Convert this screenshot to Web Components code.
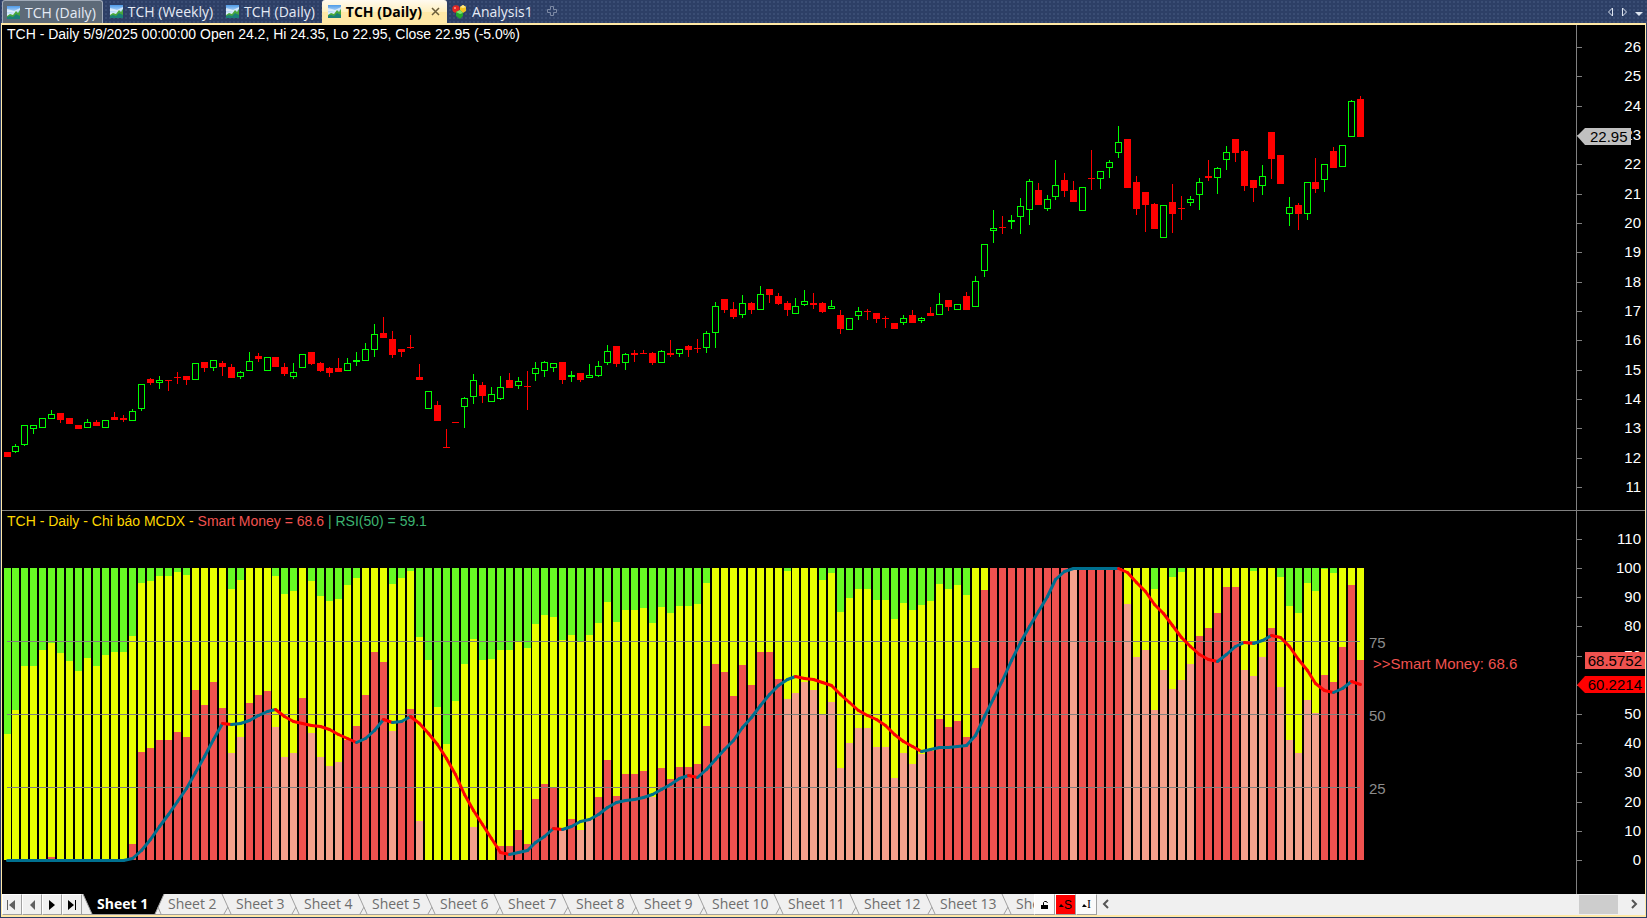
<!DOCTYPE html>
<html lang="en">
<head>
<meta charset="utf-8">
<title>TCH (Daily)</title>
<style>
  html, body { margin: 0; height: 100%; background: #2d3f66; overflow: hidden; }
  body { font-family: "Open Sans", "Noto Sans", sans-serif; font-size: 14px; }
</style>
</head>
<body>
<chart-window>
  <doc-tab slot="tab" icon="chart" class="shaded">TCH (Daily)</doc-tab>
  <doc-tab slot="tab" icon="chart">TCH (Weekly)</doc-tab>
  <doc-tab slot="tab" icon="chart">TCH (Daily)</doc-tab>
  <doc-tab slot="tab" icon="chart" active>TCH (Daily)</doc-tab>
  <doc-tab slot="tab" icon="analysis">Analysis1</doc-tab>
  <price-pane></price-pane>
  <mcdx-pane></mcdx-pane>
  <sheet-bar slot="footer">
    <sheet-tab active>Sheet 1</sheet-tab>
    <sheet-tab>Sheet 2</sheet-tab>
    <sheet-tab>Sheet 3</sheet-tab>
    <sheet-tab>Sheet 4</sheet-tab>
    <sheet-tab>Sheet 5</sheet-tab>
    <sheet-tab>Sheet 6</sheet-tab>
    <sheet-tab>Sheet 7</sheet-tab>
    <sheet-tab>Sheet 8</sheet-tab>
    <sheet-tab>Sheet 9</sheet-tab>
    <sheet-tab wide>Sheet 10</sheet-tab>
    <sheet-tab wide>Sheet 11</sheet-tab>
    <sheet-tab wide>Sheet 12</sheet-tab>
    <sheet-tab wide>Sheet 13</sheet-tab>
    <sheet-tab wide>She</sheet-tab>
  </sheet-bar>
</chart-window>

<script>
// Candles: colour, high, body top, body bottom, low
const CANDLES = `
R 452 452 457 457|G 444 446 452 453|G 425 425 445 446|G 425 425 429 434|G 418 418 428 428|G 410 414 419 419|R 413 413 420 423|R 418 418 424 424
R 425 425 429 429|G 419 422 428 428|R 420 422 426 426|G 420 420 428 428|R 412 417 420 420|R 415 418 420 422|G 409 411 421 421|G 384 384 409 411
R 378 379 383 385|G 376 380 383 389|R 380 380 381 391|R 372 377 378 384|R 376 376 380 385|G 363 363 380 380|R 362 362 368 372|G 360 360 368 371
R 361 363 367 376|R 364 367 378 378|G 371 372 377 379|G 352 361 371 371|R 353 356 359 362|G 357 357 371 371|R 357 357 367 367|R 363 367 374 376
G 363 372 377 379|G 354 354 368 368|R 352 352 364 365|R 362 363 371 372|R 367 368 373 377|R 358 368 372 372|G 358 363 371 371|G 352 360 362 366
G 343 349 361 361|G 324 334 350 357|R 317 333 338 338|R 331 339 355 358|R 349 349 352 357|R 335 347 348 349|R 364 377 380 380|G 391 391 409 409
R 401 405 421 421|R 429 447 448 448|R 422 422 423 423|G 397 398 407 428|G 374 380 397 404|R 382 385 396 403|G 387 394 402 402|G 376 387 399 400
R 373 380 388 388|G 377 381 386 389|R 371 386 387 410|G 362 368 374 381|G 361 362 371 377|G 363 363 368 372|R 362 362 380 384|G 371 375 377 382
R 373 373 380 382|G 364 375 378 378|G 361 366 376 377|G 345 351 363 365|R 346 346 364 367|G 353 354 363 370|R 350 353 355 362|R 350 353 354 354
R 352 353 363 365|G 350 351 363 363|R 340 353 355 357|G 349 349 354 357|R 345 346 350 357|R 339 348 349 353|G 331 333 348 353|G 302 306 333 348
R 299 299 310 313|R 302 309 317 319|G 295 303 315 318|R 302 303 310 314|G 286 294 310 310|R 289 289 295 303|R 293 296 304 305|R 301 303 310 316
G 298 306 314 314|G 290 301 305 306|R 293 303 305 309|R 302 303 312 313|G 300 306 309 309|R 310 315 329 334|G 318 318 330 330|G 307 311 316 320
R 309 311 312 320|R 313 313 319 323|R 316 318 319 328|R 323 323 329 329|G 315 318 323 325|R 310 315 323 323|G 317 318 321 323|R 307 313 316 316
G 293 304 315 315|R 300 300 307 311|G 304 304 310 310|R 292 296 310 310|G 276 281 307 307|G 244 244 271 277|G 210 228 231 243|R 216 227 228 234
G 215 220 222 229|G 198 206 217 234|G 179 181 210 225|R 183 190 205 205|G 195 199 209 211|G 160 185 197 200|R 173 180 191 197|R 181 190 202 202
G 187 187 211 211|R 150 178 179 190|G 171 171 179 189|G 160 162 168 178|G 126 142 153 158|R 139 139 188 188|R 176 182 209 215|R 192 192 205 232
R 203 204 229 229|G 205 205 238 238|R 184 202 214 233|R 196 208 209 220|G 196 199 203 206|G 178 182 195 210|R 160 176 178 181|G 167 168 178 194
G 146 152 160 170|R 139 139 153 162|R 150 151 186 191|R 180 180 188 202|G 165 176 186 195|R 132 132 159 179|R 155 155 184 184|G 197 207 214 226
R 203 205 214 230|G 182 182 214 220|R 158 182 189 193|G 164 164 180 192|R 147 151 168 168|G 145 145 167 167|G 100 101 137 137|R 96 99 137 137
`.trim().split(/[|\n]/).map(row => {
  const [colour, ...y] = row.split(' ');
  return { colour, y: y.map(Number) };
});

// MCDX bars: depth of the yellow top, depth of the banker top, D = dark, L = light
const BARS = `
166 292 D|142 292 D|98 292 D|98 292 D|82 292 D|75 289 D|85 292 D|93 292 D|103 292 D|90 292 D|98 292 D|87 292 D|84 292 D|84 292 D|68 276 D|15 184 D
13 180 D|8 172 D|8 172 D|4 164 D|7 169 D|0 122 D|0 137 D|0 114 D|0 140 D|21 185 L|12 169 L|0 135 D|0 127 D|0 123 D|8 159 L|26 189 L
23 185 L|0 130 D|13 165 L|28 189 L|33 198 L|31 194 L|17 172 D|10 158 D|0 127 D|0 84 D|0 94 D|16 163 L|10 154 D|3 141 D|69 253 L|92 292 D
139 292 D|176 292 D|133 292 D|96 292 D|71 259 L|92 292 D|91 292 D|82 278 D|82 278 D|73 262 D|80 276 D|56 231 D|47 216 D|49 220 D|72 261 L|67 251 D
73 262 L|67 252 L|55 229 D|34 192 D|54 228 D|42 206 D|42 206 D|40 203 D|55 229 L|39 200 D|45 211 D|38 199 D|38 199 D|36 196 D|15 158 D|0 96 D
0 104 D|0 128 D|0 97 D|0 117 D|0 84 D|0 84 D|0 111 D|3 131 L|0 125 L|0 114 L|0 122 L|12 147 L|5 134 L|44 200 L|30 175 L|21 160 L
21 160 L|32 179 L|32 179 L|51 210 L|35 185 L|42 196 L|37 186 L|33 183 D|16 151 D|21 159 D|17 153 D|27 169 D|0 100 D|0 22 D|0 0 D|0 0 D
0 0 D|0 0 D|0 0 D|0 0 D|0 0 D|0 0 D|0 0 D|0 0 L|0 0 D|0 0 D|0 0 D|0 0 D|0 0 D|0 36 L|0 89 L|0 82 L
21 142 L|0 102 L|9 121 L|4 112 L|0 96 L|0 68 D|0 60 D|0 45 D|0 19 D|0 19 D|0 102 L|3 108 L|0 89 L|0 60 D|9 119 L|38 172 L
45 185 L|15 132 L|23 145 L|1 107 D|5 114 D|0 79 D|0 17 D|0 92 D
`.trim().split(/[|\n]/).map(row => {
  const [retail, banker, tone] = row.split(' ');
  return { retail: Number(retail), banker: Number(banker), tone };
});

// Moving average of the banker line, same depth units
const AVERAGE = `
292 292 292 292 292 292 292 292 292 292 292 292 292 292 290 282 271 258 246 233 220 204 188 171 155 156 155 152 147 143
141 148 153 155 157 158 161 166 170 174 170 162 151 154 153 148 155 165 176 190 206 226 242 256 270 284 286 284 282 274
268 260 261 258 253 251 246 239 234 232 231 229 226 221 216 210 207 209 201 191 181 172 159 149 137 126 117 111 108 110
111 114 117 126 134 142 147 151 157 166 173 178 183 181 179 179 178 177 167 148 130 112 92 74 58 43 28 11 3 0
0 0 0 0 0 4 14 23 36 45 57 69 78 86 91 93 86 78 74 75 72 67 69 78 91 102 115 122 124 120
113 116
`.trim().split(/\s+/).map(Number);

// 7px bars on a pitch a little under 9px
const barX = i => 1 + 9 * i - Math.floor((i - 1) / 29);

const PANE_STYLE = `
  :host { display: block; min-height: 0; overflow: hidden; background: #000; }
  svg { display: block; width: 100%; height: 100%; font-family: "Liberation Sans", Arial, sans-serif; font-size: 15px; }
  rect, line, .tag { shape-rendering: crispEdges; }
  .rule { stroke: #808080; }
  .axis { fill: #fff; text-anchor: end; }
  .title { font-size: 14px; }
`;

class ChartPane extends HTMLElement {
  constructor() {
    super();
    this.root = this.attachShadow({ mode: 'open' });
    this.root.innerHTML = `<style>${PANE_STYLE}</style><svg role="img"></svg>`;
  }

  connectedCallback() {
    this.render();
    this.observer = new ResizeObserver(() => this.render());
    this.observer.observe(this);
  }

  disconnectedCallback() {
    this.observer.disconnect();
  }

  render() {
    const { width, height } = this.getBoundingClientRect();
    if (!width || !height) return;
    this.root.querySelector('svg').innerHTML = this.draw(Math.round(width), Math.round(height));
  }

  // Right-hand scale: vertical rule, one tick and label per step
  scale(width, height, labels) {
    const x = width - 68.5;
    let out = `<line class="rule" x1="${x}" x2="${x}" y1="0" y2="${height}"/>`;
    for (const [text, y] of labels) {
      const ty = Math.round(y);
      out += `<line class="rule" x1="${x}" x2="${x + 5}" y1="${ty + 0.5}" y2="${ty + 0.5}"/>`;
      if (text !== '') out += `<text class="axis" x="${width - 4}" y="${ty + 5}">${text}</text>`;
    }
    return out;
  }
}

class PricePane extends ChartPane {
  draw(w, h) {
    const k = h / 486;
    const y = v => Math.round((v - 25) * k);
    let out = '';
    const labels = [];
    for (let p = 26; p >= 11; p--) labels.push([p, (22 + (26 - p) * 88 / 3) * k]);
    out += this.scale(w, h, labels);
    CANDLES.forEach(({ colour, y: v }, i) => {
      const [high, top, bottom, low] = v.map(y);
      const x = barX(i);
      const c = colour === 'G' ? '#00ff00' : '#ff0000';
      if (high < top) out += `<rect x="${x + 3}" y="${high}" width="1" height="${top - high}" fill="${c}"/>`;
      if (low > bottom) out += `<rect x="${x + 3}" y="${bottom}" width="1" height="${low - bottom}" fill="${c}"/>`;
      if (colour === 'G' && bottom - top > 2) {
        out += `<rect x="${x + 0.5}" y="${top + 0.5}" width="6" height="${bottom - top - 1}" fill="none" stroke="${c}"/>`;
      } else {
        out += `<rect x="${x}" y="${top}" width="7" height="${Math.max(1, bottom - top)}" fill="${c}"/>`;
      }
    });
    const ly = y(136);
    out += `<path d="M${w - 68} ${ly}l8-8h46v17h-46z" fill="#c0c0c0"/>
      <text x="${w - 55}" y="${ly + 6}">22.95</text>
      <text class="title" x="5" y="14" fill="#fff">TCH - Daily 5/9/2025 00:00:00 Open 24.2, Hi 24.35, Lo 22.95, Close 22.95 (-5.0%)</text>
      <line class="rule" x1="0" x2="${w}" y1="${h - 0.5}" y2="${h - 0.5}"/>`;
    return out;
  }
}

class McdxPane extends ChartPane {
  draw(w, h) {
    const k = h / 383;
    const top = Math.round(57 * k);
    const y = d => top + Math.round(d * k);
    const base = y(292);
    const labels = [];
    // the average's tag sits on the 60 mark, so that one stays unlabelled
    for (let v = 110; v >= 0; v -= 10) labels.push([v === 60 ? '' : v, y(292 - v * 2.92)]);
    let out = this.scale(w, h, labels);
    const bar = (x, a, b, fill) => b > a ? `<rect x="${x}" y="${a}" width="7" height="${b - a}" fill="${fill}"/>` : '';
    BARS.forEach(({ retail, banker, tone }, i) => {
      const x = barX(i);
      const ry = y(retail);
      const by = y(banker);
      out += bar(x, top, ry, '#66fa23') + bar(x, ry, by, '#e8ff00')
        + bar(x, by, base, tone === 'D' ? '#f0524f' : '#f5a08c');
    });
    const end = barX(151) + 3;
    for (const v of [75, 50, 25]) {
      const gy = y(292 - v * 2.92) + 0.5;
      out += `<line class="rule" x1="5" x2="${end}" y1="${gy}" y2="${gy}"/>
        <text x="${end + 9}" y="${gy + 6}" fill="#8c8c8c">${v}</text>`;
    }
    for (let i = 1; i < AVERAGE.length; i++) {
      const a = AVERAGE[i - 1];
      const b = AVERAGE[i];
      out += `<line style="shape-rendering:auto" x1="${barX(i - 1) + 3.5}" y1="${y(a) + 0.5}" x2="${barX(i) + 3.5}" y2="${y(b) + 0.5}"
        stroke="${b > a ? '#ff0000' : '#007090'}" stroke-width="3" stroke-linecap="round"/>`;
    }
    const money = y(292 - 68.5752 * 2.92);
    const avg = y(116);
    out += `<text x="${end + 13}" y="${money + 9}" fill="#f0524f">&gt;&gt;Smart Money: 68.6</text>
      <path class="tag" d="M${w - 60} ${money - 8}h60v17h-60z" fill="#f0524f"/>
      <text x="${w - 3}" y="${money + 6}" text-anchor="end">68.5752</text>
      <path d="M${w - 68} ${avg + 1}l8-9h60v17h-60z" fill="#ff0000"/>
      <text x="${w - 3}" y="${avg + 6}" text-anchor="end">60.2214</text>
      <text class="title" x="5" y="15"><tspan fill="#ffd700">TCH - Daily - Chỉ báo MCDX - </tspan><tspan fill="#f0524f">Smart Money = 68.6 </tspan><tspan fill="#3cb371">| RSI(50) = 59.1</tspan></text>`;
    return out;
  }
}

const TAB_ICONS = {
  chart: `<svg width="13" height="13" viewBox="0 0 13 13">
    <defs><linearGradient id="s" x2="0" y2="1"><stop offset="0" stop-color="#4f9be8"/><stop offset=".7" stop-color="#e8f5ff"/></linearGradient></defs>
    <path fill="url(#s)" d="M0 0h13v13H0z"/><path d="M0 3l4 1 3 1 6-3v2L8 7 4 6 0 6z" fill="#fff" opacity=".6"/>
    <path d="M0 10l3-2 3 1 3-4 2 2 2-3v9H0z" fill="#49a83b"/><path d="M0 13v-2l3-1 3 1 3-3 4 2v3z" fill="#1b8078"/></svg>`,
  analysis: `<svg width="15" height="14" viewBox="0 0 15 14">
    <circle cx="4" cy="4" r="3.7" fill="#e52620"/><path d="M8 2l3-2 3 2v4l-3 2-3-2z" fill="#f3c322"/><path d="M8 2l3 1 3-1-3-2z" fill="#ffe987"/>
    <path d="M4 7l4-2 3 3v3l-3 3-4-3z" fill="#22a82b"/><path d="M4 7l4-2 3 3-3 1z" fill="#87e26d"/><circle cx="3" cy="3" r="1" fill="#ff9a8c"/></svg>`
};

class DocTab extends HTMLElement {
  connectedCallback() {
    const active = this.hasAttribute('active');
    this.attachShadow({ mode: 'open' }).innerHTML = `
      <style>
        :host { display: flex; box-sizing: border-box; height: 23px; padding: 0 6px; color: #e6ebf5; white-space: nowrap; }
        :host(.shaded) { padding: 0 6px 0 4px; background: #5d6a78; border: 1px solid #a0aab8; border-bottom: 0; border-radius: 3px 3px 0 0; }
        :host([active]) { padding: 0 6px; background: linear-gradient(#fffaf0, #fff0c0 50%, #ffe8a6 52%); color: #000; font-weight: bold; border-radius: 3px 3px 0 0; }
        :host([icon=analysis]) { padding: 0 6px 0 4px; }
        button { all: unset; display: flex; align-items: center; gap: 5px; }
        svg { display: block; flex: none; }
        .close { margin-left: 9px; }
      </style>
      <button role="tab" aria-selected="${active}">${TAB_ICONS[this.getAttribute('icon')]}<slot></slot></button>
      ${active ? `<button class="close" aria-label="Close"><svg width="10" height="10"><path d="M1 1l7 7M8 1l-7 7" stroke="#6b5d3b" stroke-width="1.5"/></svg></button>` : ''}`;
  }
}

class ChartWindow extends HTMLElement {
  connectedCallback() {
    this.attachShadow({ mode: 'open' }).innerHTML = `
      <style>
        :host { display: grid; grid-template-rows: 23px 1fr; height: 100vh; }
        header { display: flex; justify-content: space-between; padding: 0 3px 0 2px;
          background: #2d3f66 radial-gradient(#3a4d74 1px, transparent 1px) 0 0 / 4px 4px; }
        nav, .tools { display: flex; align-items: center; }
        nav { gap: 1px; }
        .tools { gap: 7px; }
        header button { all: unset; display: flex; }
        .add { margin-left: 6px; }
        main { display: grid; grid-template-rows: 486fr 383fr 21px; min-height: 0; margin: 0 1px 1px;
          border: 1px solid #ffe8a6; border-width: 2px 1px; }
      </style>
      <header>
        <nav role="tablist"><slot name="tab"></slot>
          <button class="add" aria-label="New tab"><svg width="13" height="13"><path d="M4.500 1.500h3v3h3v3h-3v3h-3v-3h-3v-3h3z" fill="none" stroke="#7d8aa5"/></svg></button>
        </nav>
        <div class="tools">
          <button aria-label="Scroll left"><svg width="7" height="10"><path d="M5.500 1v8l-4-4z" fill="none" stroke="#dde4f0"/></svg></button>
          <button aria-label="Scroll right"><svg width="7" height="10"><path d="M1.500 1v8l4-4z" fill="none" stroke="#dde4f0"/></svg></button>
          <button aria-label="Window list"><svg width="9" height="10"><path d="M0 5h8l-4 4z" fill="#dde4f0"/></svg></button>
        </div>
      </header>
      <main><slot></slot><slot name="footer"></slot></main>`;
  }
}

class SheetTab extends HTMLElement {
  connectedCallback() {
    const active = this.hasAttribute('active');
    this.attachShadow({ mode: 'open' }).innerHTML = `
      <style>
        :host { display: block; flex: none; width: 68px; color: #6d6d6d; white-space: nowrap; }
        :host([wide]) { width: 76px; }
        :host([active]) { width: 86px; color: #fff; font-weight: bold; }
        button { all: unset; display: flex; justify-content: space-between; width: 100%; height: 20px; line-height: 19px; }
        :host([active]) button { display: grid; }
        :host([active]) button > * { grid-area: 1 / 1; }
        :host([active]) span { padding-left: 15px; }
        svg { display: block; flex: none; }
      </style>
      <button role="tab" aria-selected="${active}">${active
        ? '<svg width="86" height="20"><path d="M1 0h81l-9 20H10z"/><path d="M1 0l9 20M82 0l-9 20M76 13l3 7" fill="none" stroke="#a0a0a0"/></svg><span><slot></slot></span>'
        : '<span><slot></slot></span><svg width="19" height="20"><path d="M5 0l9 20M11 13l-4 7" fill="none" stroke="#a0a0a0"/></svg>'}</button>`;
  }
}

class SheetBar extends HTMLElement {
  connectedCallback() {
    const nav = (label, path, fill) => `<button class="nav" aria-label="${label}"><svg width="14" height="12"><path d="${path}" fill="${fill}"/></svg></button>`;
    this.attachShadow({ mode: 'open' }).innerHTML = `
      <style>
        :host { display: flex; height: 21px; background: #f0f0f0; overflow: hidden; }
        button { all: unset; display: flex; align-items: center; justify-content: center; box-sizing: border-box; flex: none; }
        svg { display: block; }
        .nav { width: 20px; border: 1px solid #fff; border-right-color: #a0a0a0; border-bottom-color: #a0a0a0; }
        .group { display: flex; flex: 0 0 calc(63% - 3px); min-width: 0; }
        .sheets { display: flex; flex: 1; min-width: 0; box-sizing: border-box; overflow: hidden; border-bottom: 1px solid #a0a0a0; }
        .tool { width: 21px; background: #fafafa; border: 1px solid #fff; border-right-color: #a0a0a0; border-bottom-color: #a0a0a0;
          font: 12px "Liberation Serif", serif; color: #000; }
        .tool.on { background: #f00; font-family: "Liberation Sans", sans-serif; }
        .track { display: flex; flex: 1; align-items: stretch; padding: 0 2px 1px 0; }
        .arrow { width: 18px; }
        .thumb { width: 39px; margin: 1px 7px 0 auto; background: #cdcdcd; }
      </style>
      <div class="group">
        ${nav('First sheet', 'M2 1h1v10H2zM10 1v10L4 6z', '#606060')}
        ${nav('Previous sheet', 'M10 1v10L5 6z', '#606060')}
        ${nav('Next sheet', 'M4 1v10l6-5z', '#000')}
        ${nav('Last sheet', 'M3 1v10l6-5zM10 1h1v10h-1z', '#000')}
        <div class="sheets" role="tablist"><slot></slot></div>
      </div>
      <button class="tool" aria-label="Lock"><svg width="9" height="10"><path d="M1 5h7v4H1z"/><path d="M3.500 5V2.500L4.500 1.500h2L7.500 3" fill="none" stroke="#000"/></svg></button>
      <button class="tool on"><svg width="5" height="4"><path d="M0 4l2-3 3 3z"/></svg>S</button>
      <button class="tool"><svg width="5" height="4"><path d="M0 4l2-3 3 3z"/></svg>I</button>
      <div class="track">
        <button class="arrow" aria-label="Scroll left"><svg width="8" height="12"><path d="M6 2L2 6l4 4" fill="none" stroke="#555" stroke-width="2"/></svg></button>
        <div class="thumb"></div>
        <button class="arrow" aria-label="Scroll right"><svg width="8" height="12"><path d="M2 2l4 4-4 4" fill="none" stroke="#555" stroke-width="2"/></svg></button>
      </div>`;
  }
}

customElements.define('price-pane', PricePane);
customElements.define('mcdx-pane', McdxPane);
customElements.define('doc-tab', DocTab);
customElements.define('sheet-tab', SheetTab);
customElements.define('sheet-bar', SheetBar);
customElements.define('chart-window', ChartWindow);
</script>
</body>
</html>
